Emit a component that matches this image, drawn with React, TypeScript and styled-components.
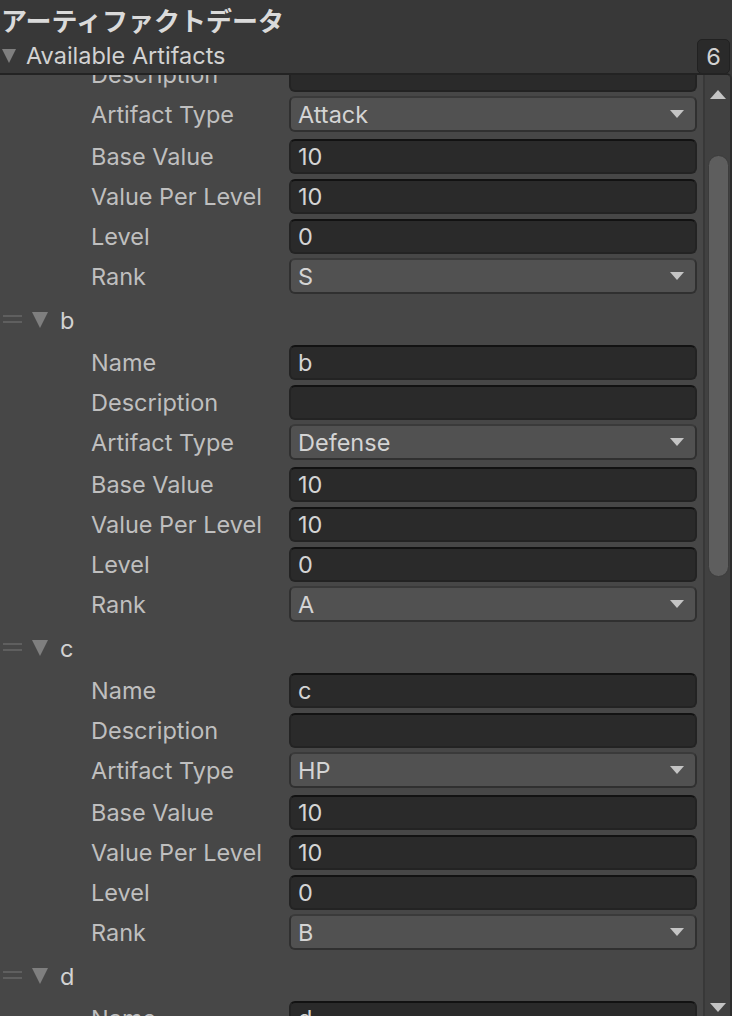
import React, { FC } from "react";
import styled, { createGlobalStyle } from "styled-components";

const GlobalStyle = createGlobalStyle`
  html, body {
    margin: 0;
    padding: 0;
    background: #383838;
  }
  * {
    box-sizing: border-box;
  }
`;

const Window = styled.div`
  width: 732px;
  height: 1016px;
  background: #383838;
  display: flex;
  flex-direction: column;
  overflow: hidden;
  font-family: Inter, "Noto Sans", "Noto Sans CJK JP", sans-serif;
  color: #d2d2d2;
`;

const Title = styled.div`
  height: 38px;
  display: flex;
  align-items: center;
  padding-left: 1px;
  font-family: "Noto Sans CJK JP", sans-serif;
  font-weight: 700;
  font-size: 26px;
  color: #dadada;
`;

const ListHeader = styled.div`
  height: 35px;
  display: flex;
  align-items: center;
  font-size: 23.5px;
  color: #d2d2d2;
`;

const Caret = styled.span<{ $size?: number }>`
  width: 0;
  height: 0;
  border-left: ${(p) => (p.$size ?? 15) / 2}px solid transparent;
  border-right: ${(p) => (p.$size ?? 15) / 2}px solid transparent;
  border-top: ${(p) => (p.$size ?? 15) - 1}px solid #7f7f7f;
  flex: none;
`;

const HeaderLabel = styled.span`
  margin-left: 10px;
  flex: 1;
`;

const Count = styled.div`
  width: 33px;
  height: 35px;
  margin-right: 2px;
  margin-top: 1px;
  border-radius: 5px;
  background: #2a2a2a;
  border: 1px solid #212121;
  display: flex;
  align-items: center;
  justify-content: center;
  font-size: 23.5px;
  color: #d2d2d2;
`;

const Panel = styled.div`
  flex: 1;
  display: flex;
  background: #474747;
  border-top: 2px solid #232323;
  border-right: 2px solid #2d2d2d;
  border-top-right-radius: 6px;
  overflow: hidden;
`;

const Content = styled.div`
  flex: 1;
  overflow: hidden;
`;

const Scrolled = styled.div<{ $offset: number }>`
  margin-top: ${(p) => -p.$offset}px;
  padding-right: 6px;
`;

const Row = styled.div<{ $tall?: boolean }>`
  height: ${(p) => (p.$tall ? 42 : 40)}px;
  padding-bottom: ${(p) => (p.$tall ? 2 : 0)}px;
  display: flex;
  align-items: center;
  padding-left: 91px;
`;

const Label = styled.div`
  width: 198px;
  font-size: 23.5px;
  color: #bfbfbf;
  white-space: nowrap;
`;

const TextField = styled.div`
  flex: 1;
  height: 35px;
  border-radius: 6px;
  background: #2a2a2a;
  border: 2px solid #232323;
  border-top-color: #121212;
  display: flex;
  align-items: center;
  padding-left: 7px;
  font-size: 23.5px;
  color: #d4d4d4;
`;

const Popup = styled.div`
  flex: 1;
  height: 36px;
  border-radius: 6px;
  background: #515151;
  border: 2px solid #303030;
  border-top-color: #3a3a3a;
  display: flex;
  align-items: center;
  padding-left: 7px;
  padding-right: 11px;
  font-size: 23.5px;
  color: #d4d4d4;
`;

const PopupText = styled.span`
  flex: 1;
`;

const PopupArrow = styled.span`
  width: 0;
  height: 0;
  border-left: 7px solid transparent;
  border-right: 7px solid transparent;
  border-top: 8px solid #c4c4c4;
`;

const ElementHeader = styled.div`
  height: 46px;
  display: flex;
  align-items: center;
  padding-left: 3px;
  padding-top: 2px;
  font-size: 23.5px;
  color: #d2d2d2;
`;

const Handle = styled.span`
  width: 19px;
  height: 8px;
  border-top: 2px solid #5f5f5f;
  border-bottom: 2px solid #5f5f5f;
  margin-right: 10px;
  margin-top: -2px;
  flex: none;
`;

const ElementName = styled.span`
  margin-left: 12px;
`;

const Scrollbar = styled.div`
  width: 27px;
  flex: none;
  background: #414141;
  border-left: 2px solid #383838;
  display: flex;
  flex-direction: column;
  align-items: center;
`;

const ArrowUp = styled.span`
  margin-top: 15px;
  width: 0;
  height: 0;
  border-left: 8px solid transparent;
  border-right: 8px solid transparent;
  border-bottom: 9px solid #c4c4c4;
`;

const ArrowDown = styled.span`
  width: 0;
  height: 0;
  border-left: 8px solid transparent;
  border-right: 8px solid transparent;
  border-top: 9px solid #c4c4c4;
  margin-bottom: 4px;
`;

const Track = styled.div`
  flex: 1;
  width: 100%;
  display: flex;
  flex-direction: column;
  align-items: center;
`;

const Thumb = styled.div<{ $top: number; $height: number }>`
  margin-top: ${(p) => p.$top}px;
  height: ${(p) => p.$height}px;
  width: 21px;
  margin-left: 1px;
  border-radius: 11px;
  background: #5e5e5e;
  border: 1px solid #3c3c3c;
`;

type Field = { label: string; value: string; popup?: boolean };

const fieldsFor = (name: string, type: string, rank: string): Field[] => [
  { label: "Name", value: name },
  { label: "Description", value: "" },
  { label: "Artifact Type", value: type, popup: true },
  { label: "Base Value", value: "10" },
  { label: "Value Per Level", value: "10" },
  { label: "Level", value: "0" },
  { label: "Rank", value: rank, popup: true },
];

const elements = [
  { name: "a", type: "Attack", rank: "S" },
  { name: "b", type: "Defense", rank: "A" },
  { name: "c", type: "HP", rank: "B" },
  { name: "d", type: "Speed", rank: "C" },
];

const PropertyRow: FC<{ field: Field }> = ({ field }) => (
  <Row $tall={field.label === "Artifact Type"}>
    <Label>{field.label}</Label>
    {field.popup ? (
      <Popup>
        <PopupText>{field.value}</PopupText>
        <PopupArrow />
      </Popup>
    ) : (
      <TextField>{field.value}</TextField>
    )}
  </Row>
);

const App: FC = () => {
  return (
    <>
      <GlobalStyle />
      <Window>
        <Title>アーティファクトデータ</Title>
        <ListHeader>
          <Caret $size={15} style={{ marginLeft: 2 }} />
          <HeaderLabel>Available Artifacts</HeaderLabel>
          <Count>6</Count>
        </ListHeader>
        <Panel>
          <Content>
            {/* scrolled: the first element is visible from its Description row */}
            <Scrolled $offset={21}>
              {elements.map((el, i) => {
                const fields = fieldsFor(el.name, el.type, el.rank);
                return (
                  <div key={el.name}>
                    {i > 0 && (
                      <ElementHeader>
                        <Handle />
                        <Caret $size={17} />
                        <ElementName>{el.name}</ElementName>
                      </ElementHeader>
                    )}
                    {(i === 0 ? fields.slice(1) : fields).map((f) => (
                      <PropertyRow key={f.label} field={f} />
                    ))}
                  </div>
                );
              })}
            </Scrolled>
          </Content>
          <Scrollbar>
            <ArrowUp />
            <Track>
              <Thumb $top={56} $height={422} />
            </Track>
            <ArrowDown />
          </Scrollbar>
        </Panel>
      </Window>
    </>
  );
};

export default App;
